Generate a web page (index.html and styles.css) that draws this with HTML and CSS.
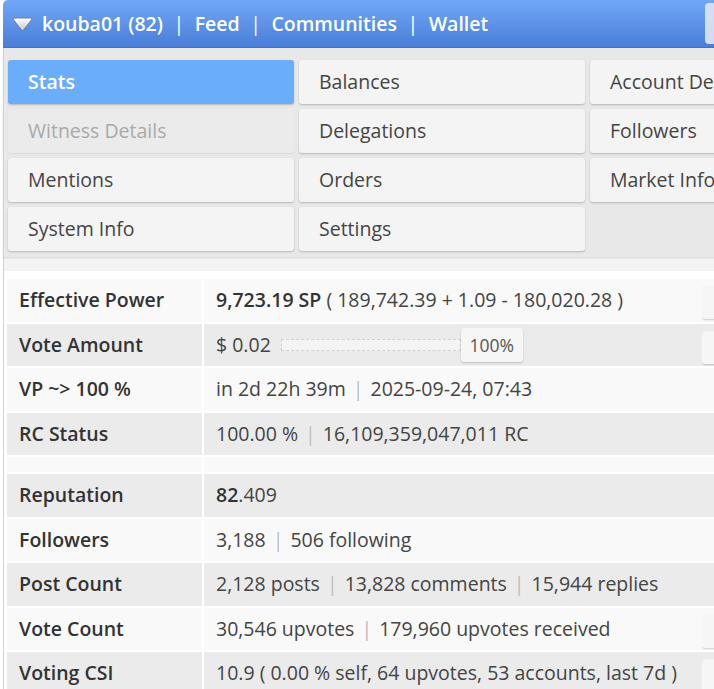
FILE: index.html
```html
<!DOCTYPE html>
<html lang="en">
<head>
<meta charset="utf-8">
<title>kouba01 - Stats</title>
<link rel="stylesheet" href="styles.css">
</head>
<body>
<div class="page">
  <header class="topbar">
    <svg class="caret" width="21" height="15" viewBox="0 0 21 15">
      <defs>
        <linearGradient id="cg" x1="0" y1="0" x2="0" y2="1">
          <stop offset="0" stop-color="#ffffff"/>
          <stop offset="1" stop-color="#c3c8d1"/>
        </linearGradient>
      </defs>
      <path d="M1.5 2.8 Q0.6 1 2.8 1 L18.2 1 Q20.4 1 19.5 2.8 L11.6 13 Q10.5 14.3 9.4 13 Z" fill="url(#cg)" stroke="#66738a" stroke-width="0.9"/>
    </svg>
    <nav class="topnav">
      <span class="topnav-item">kouba01 (82)</span>
      <span class="topnav-sep">|</span>
      <span class="topnav-item">Feed</span>
      <span class="topnav-sep">|</span>
      <span class="topnav-item">Communities</span>
      <span class="topnav-sep">|</span>
      <span class="topnav-item">Wallet</span>
    </nav>
    <div class="topbar-tools"></div>
  </header>

  <section class="menu">
    <div class="menu-btn active">Stats</div>
    <div class="menu-btn">Balances</div>
    <div class="menu-btn">Account Details</div>
    <div class="menu-btn disabled">Witness Details</div>
    <div class="menu-btn">Delegations</div>
    <div class="menu-btn">Followers</div>
    <div class="menu-btn">Mentions</div>
    <div class="menu-btn">Orders</div>
    <div class="menu-btn">Market Info</div>
    <div class="menu-btn">System Info</div>
    <div class="menu-btn">Settings</div>
  </section>

  <section class="stats">
    <div class="stats-body">
      <table class="stats-table">
        <colgroup>
          <col class="col-label">
          <col class="col-value">
          <col class="col-action">
        </colgroup>
        <tbody>
          <tr class="row-light">
            <td class="label">Effective Power</td>
            <td class="value"><b>9,723.19 SP</b> ( 189,742.39 + 1.09 - 180,020.28 )</td>
            <td class="action"><span class="mini-btn"></span></td>
          </tr>
          <tr class="row-dark">
            <td class="label">Vote Amount</td>
            <td class="value">
              <div class="vote-line">
                <span>$ 0.02</span>
                <span class="slider-track"></span>
                <span class="slider-btn">100%</span>
              </div>
            </td>
            <td class="action"><span class="mini-btn"></span></td>
          </tr>
          <tr class="row-light">
            <td class="label">VP ~&gt; 100 %</td>
            <td class="value">in 2d 22h 39m<span class="sep">|</span>2025-09-24, 07:43</td>
            <td class="action"></td>
          </tr>
          <tr class="row-dark">
            <td class="label">RC Status</td>
            <td class="value">100.00 %<span class="sep">|</span>16,109,359,047,011 RC</td>
            <td class="action"></td>
          </tr>
          <tr class="row-light spacer">
            <td></td><td class="value"></td><td></td>
          </tr>
          <tr class="row-dark">
            <td class="label">Reputation</td>
            <td class="value"><b>82</b>.409</td>
            <td class="action"></td>
          </tr>
          <tr class="row-light">
            <td class="label">Followers</td>
            <td class="value">3,188<span class="sep">|</span>506 following</td>
            <td class="action"></td>
          </tr>
          <tr class="row-dark">
            <td class="label">Post Count</td>
            <td class="value">2,128 posts<span class="sep">|</span>13,828 comments<span class="sep">|</span>15,944 replies</td>
            <td class="action"></td>
          </tr>
          <tr class="row-light">
            <td class="label">Vote Count</td>
            <td class="value">30,546 upvotes<span class="sep">|</span>179,960 upvotes received</td>
            <td class="action"><span class="mini-btn"></span></td>
          </tr>
          <tr class="row-dark">
            <td class="label">Voting CSI</td>
            <td class="value">10.9 ( 0.00 % self, 64 upvotes, 53 accounts, last 7d )</td>
            <td class="action"><span class="mini-btn"></span></td>
          </tr>
        </tbody>
      </table>
    </div>
  </section>
</div>
</body>
</html>
```

FILE: styles.css
```css
html {
  overflow: hidden;
}

body {
  margin: 0;
  background: #ffffff;
  font-family: "Open Sans", "DejaVu Sans", sans-serif;
  color: #444444;
}

.page {
  width: 880px;
  margin-left: 3px;
}

/* ---------- top bar ---------- */
.topbar {
  height: 48px;
  box-sizing: border-box;
  display: flex;
  align-items: center;
  padding: 0 8px 1px 9px;
  background: linear-gradient(#71a7f7, #4a7ed8);
  border-radius: 5px 0 0 0;
  border-bottom: 1px solid #4373c6;
  color: #ffffff;
  font-size: 19.5px;
  font-weight: 600;
}

.caret {
  flex: none;
  margin-right: 9px;
  margin-top: 3px;
}

.topnav {
  display: flex;
  align-items: center;
  white-space: nowrap;
}

.topnav-sep {
  margin: 0 10.5px;
  font-weight: 400;
}

.topbar-tools {
  margin-left: auto;
  width: 170px;
  height: 41px;
  border-radius: 4px;
  background: #dfe6f1;
  opacity: 0.9;
}

/* ---------- menu ---------- */
.menu {
  border-left: 1px solid #d2d2d2;
  background: #e8e8e8;
  padding: 12px 4px 6px;
  display: grid;
  grid-template-columns: repeat(3, 286px);
  grid-auto-rows: 44px;
  gap: 5px;
  box-shadow: 0 1px 2px rgba(0, 0, 0, 0.12);
  position: relative;
}

.menu-btn {
  display: flex;
  align-items: center;
  padding: 0 20px 2px;
  background: #f4f4f4;
  border-radius: 3px;
  box-shadow: 0 1px 2px rgba(0, 0, 0, 0.22);
  font-size: 19.5px;
  color: #444444;
  white-space: nowrap;
  overflow: hidden;
}

.menu-btn.active {
  background: #69adfb;
  color: #ffffff;
  font-weight: 600;
}

.menu-btn.disabled {
  background: #ebebeb;
  color: #a9a9a9;
  box-shadow: 0 1px 1px rgba(0, 0, 0, 0.06);
}

/* ---------- stats table ---------- */
.stats {
  border-left: 1px solid #d2d2d2;
  background: #f3f3f3;
  padding-top: 14px;
}

.stats-body {
  background: #ffffff;
  padding-top: 6px;
}

.stats-table {
  table-layout: fixed;
  width: 780px;
  border-spacing: 0 2px;
  margin-left: 3px;
  font-size: 19.5px;
}

.col-label { width: 195px; }
.col-value { width: 500px; }
.col-action { width: 85px; }

.stats-table td {
  padding: 9px 12px;
  line-height: 24.5px;
  white-space: nowrap;
  vertical-align: middle;
}

.row-light td { background: #f9f9f9; }
.row-dark td { background: #ebebeb; }

.stats-table td.value {
  border-left: 2px solid #ffffff;
  color: #444444;
}

.label {
  font-weight: 600;
  color: #333333;
}

.value b {
  font-weight: 600;
  color: #333333;
}

.sep {
  color: #bdbdbd;
  margin: 0 7px;
}

.stats-table .spacer td {
  height: 15px;
  padding: 0;
  line-height: 15px;
}

.stats-table td.action {
  padding: 7px 0 0 0;
  vertical-align: top;
  overflow: hidden;
}

.mini-btn {
  display: block;
  height: 33px;
  width: 60px;
  background: #f6f6f6;
  border-radius: 3px;
  box-shadow: 0 1px 2px rgba(0, 0, 0, 0.18);
}

.vote-line {
  display: flex;
  align-items: center;
  height: 24.5px;
}

.slider-track {
  width: 178px;
  height: 10px;
  margin-left: 10px;
  border: 1px dashed #d0d0d0;
  background: #f4f4f4;
}

.slider-btn {
  display: flex;
  align-items: center;
  justify-content: center;
  width: 62px;
  height: 34px;
  box-sizing: border-box;
  background: #f6f6f6;
  border-radius: 3px;
  box-shadow: 0 1px 2px rgba(0, 0, 0, 0.2);
  font-size: 17.5px;
  color: #555555;
}
```
